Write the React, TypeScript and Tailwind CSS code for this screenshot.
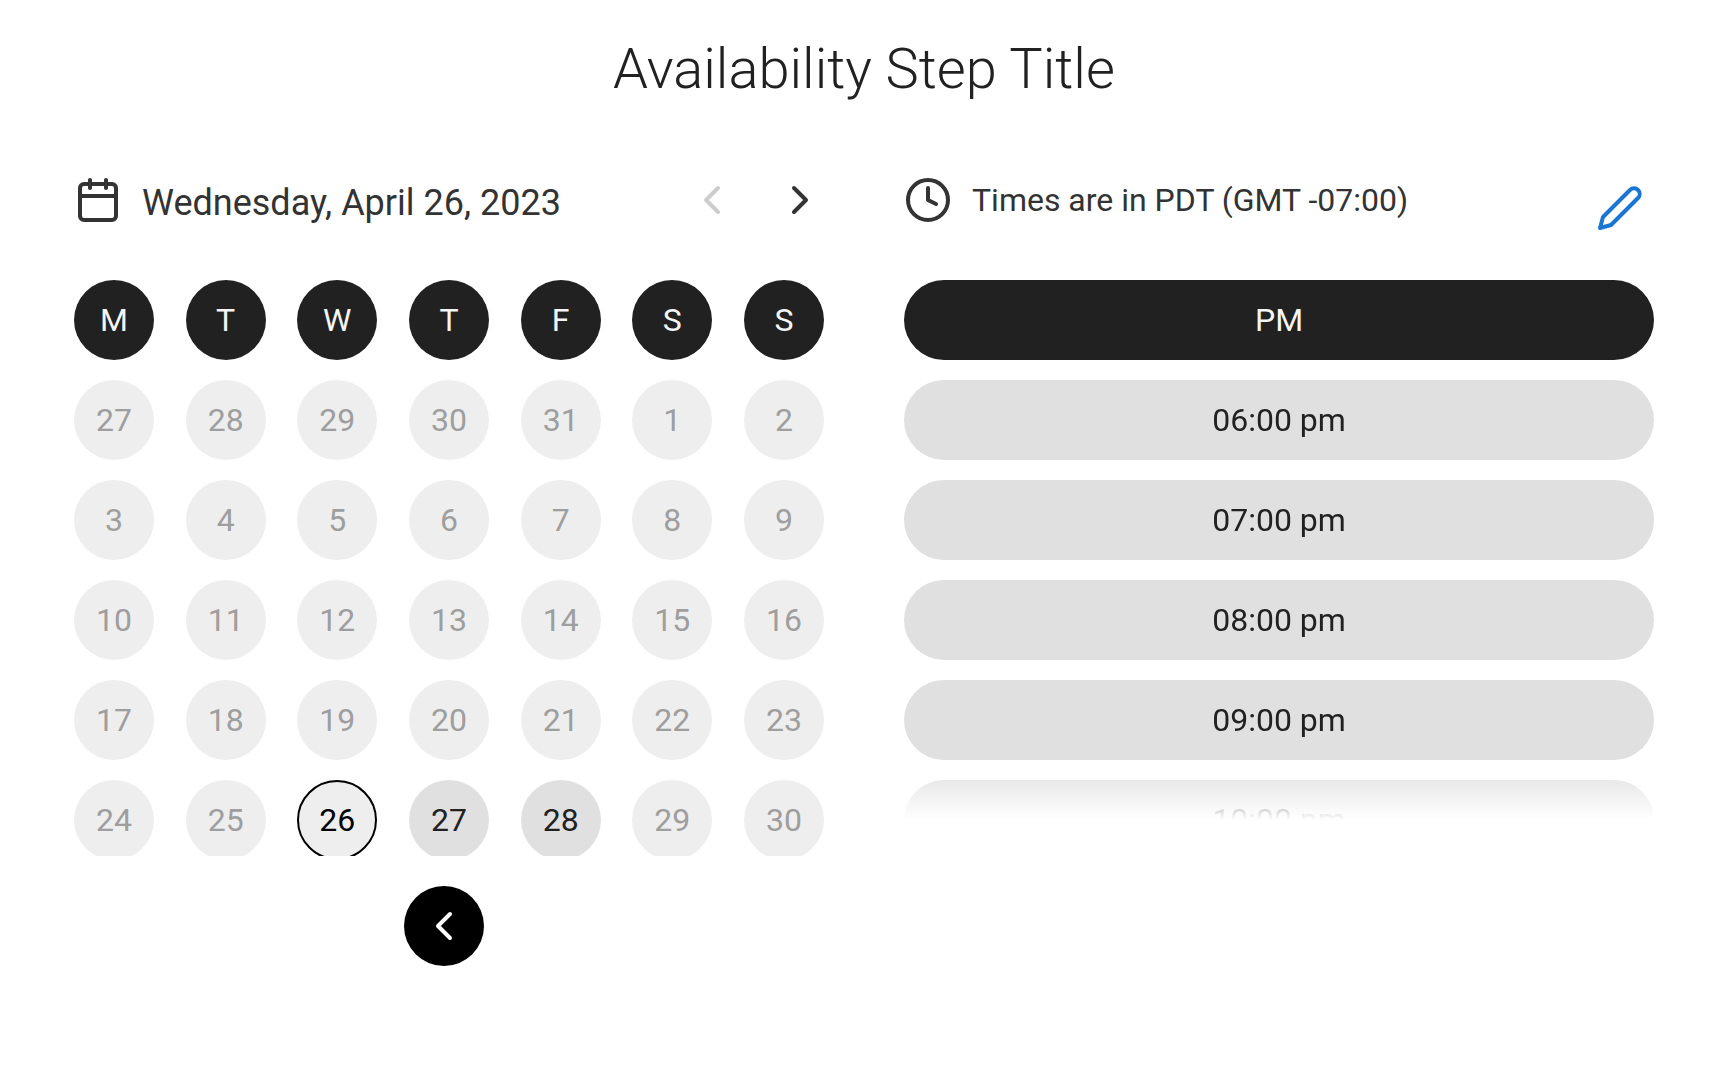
import { Calendar, ChevronLeft, ChevronRight, Clock } from 'lucide-react';
import clsx from 'clsx';

type DayState = 'disabled' | 'selected' | 'available';

interface Day {
  key: string;
  label: number;
  state: DayState;
}

const WEEKDAYS = [
  { short: 'M', name: 'Monday' },
  { short: 'T', name: 'Tuesday' },
  { short: 'W', name: 'Wednesday' },
  { short: 'T', name: 'Thursday' },
  { short: 'F', name: 'Friday' },
  { short: 'S', name: 'Saturday' },
  { short: 'S', name: 'Sunday' },
];

const TIMES = ['06:00 pm', '07:00 pm', '08:00 pm', '09:00 pm', '10:00 pm'];

const SELECTED = 26;
const AVAILABLE = [27, 28];

function stateOf(date: number): DayState {
  if (date === SELECTED) return 'selected';
  return AVAILABLE.includes(date) ? 'available' : 'disabled';
}

const DAYS: Day[] = [
  // tail of March, never bookable
  ...[27, 28, 29, 30, 31].map((d) => ({ key: `mar-${d}`, label: d, state: 'disabled' as DayState })),
  ...Array.from({ length: 30 }, (_, i) => ({ key: `apr-${i + 1}`, label: i + 1, state: stateOf(i + 1) })),
];

function PencilIcon() {
  return (
    <svg
      className="size-12"
      viewBox="0 0 24 24"
      fill="none"
      stroke="currentColor"
      strokeWidth="2"
      strokeLinecap="round"
      strokeLinejoin="round"
      aria-hidden="true"
    >
      <path d="M17 3a2.828 2.828 0 1 1 4 4L7.5 20.5 2 22l1.5-5.5L17 3z" />
    </svg>
  );
}

function DayButton({ day }: { day: Day }) {
  return (
    <button
      type="button"
      disabled={day.state === 'disabled'}
      aria-pressed={day.state === 'selected'}
      className={clsx(
        'size-20 rounded-full text-center',
        day.state === 'disabled' && 'bg-[#eeeeee] text-[#9e9e9e]',
        day.state === 'selected' && 'border-2 border-black bg-[#eeeeee] text-black',
        day.state === 'available' && 'bg-[#e0e0e0] text-[#212121]',
      )}
    >
      {day.label}
    </button>
  );
}

function CalendarPanel() {
  return (
    <section>
      <div className="flex min-h-[68px] items-start pt-0.5 text-[#333333]">
        <Calendar className="size-12 shrink-0" />
        <h2 className="ml-5 flex-1 text-[36px] leading-[54px]">Wednesday, April 26, 2023</h2>
        <div className="flex gap-10">
          <button type="button" disabled aria-label="Previous month" className="text-[#cccccc]">
            <ChevronLeft className="size-12" />
          </button>
          <button type="button" aria-label="Next month">
            <ChevronRight className="size-12" />
          </button>
        </div>
      </div>

      {/* Weekday header */}
      <div className="mt-[38px] flex justify-between">
        {WEEKDAYS.map((d) => (
          <div
            key={d.name}
            title={d.name}
            className="flex size-20 items-center justify-center rounded-full bg-[#212121] text-[#f5f5f5]"
          >
            {d.short}
          </div>
        ))}
      </div>

      {/* Days */}
      <div className="mt-5 grid max-h-[476px] grid-cols-[repeat(7,80px)] justify-between gap-y-5 overflow-hidden">
        {DAYS.map((day) => (
          <DayButton key={day.key} day={day} />
        ))}
      </div>

      <div className="mt-[30px] flex justify-center pr-2.5">
        <button
          type="button"
          aria-label="Back"
          className="flex size-20 items-center justify-center rounded-full bg-black text-white"
        >
          <ChevronLeft className="size-12" />
        </button>
      </div>
    </section>
  );
}

function TimesPanel() {
  return (
    <section>
      <div className="flex min-h-[68px] items-start text-[#333333]">
        <div className="flex flex-1 items-center gap-5 pt-0.5">
          <Clock className="size-12 shrink-0" />
          <p className="leading-12">Times are in PDT (GMT -07:00)</p>
        </div>
        <button type="button" aria-label="Change time zone" className="p-2.5 text-[#1976d2]">
          <PencilIcon />
        </button>
      </div>

      <div className="mt-[38px] flex h-20 items-center justify-center rounded-full bg-[#212121] text-[#f5f5f5]">
        PM
      </div>

      {/* Slots, fading out at the bottom edge */}
      <div className="mt-5 flex max-h-[440px] flex-col gap-5 overflow-hidden [mask-image:linear-gradient(to_bottom,black_calc(100%-56px),transparent)]">
        {TIMES.map((time) => (
          <button key={time} type="button" className="h-20 shrink-0 rounded-full bg-[#e0e0e0] text-[#212121]">
            {time}
          </button>
        ))}
      </div>
    </section>
  );
}

export default function App() {
  return (
    <main className="min-h-screen bg-white pt-[37px] pr-14 pb-10 pl-[74px] font-[Roboto,sans-serif] text-[32px]">
      <h1 className="text-center text-[56px] leading-16 font-light text-[#212121]">Availability Step Title</h1>
      <div className="mt-[73px] grid grid-cols-2 gap-20">
        <CalendarPanel />
        <TimesPanel />
      </div>
    </main>
  );
}
